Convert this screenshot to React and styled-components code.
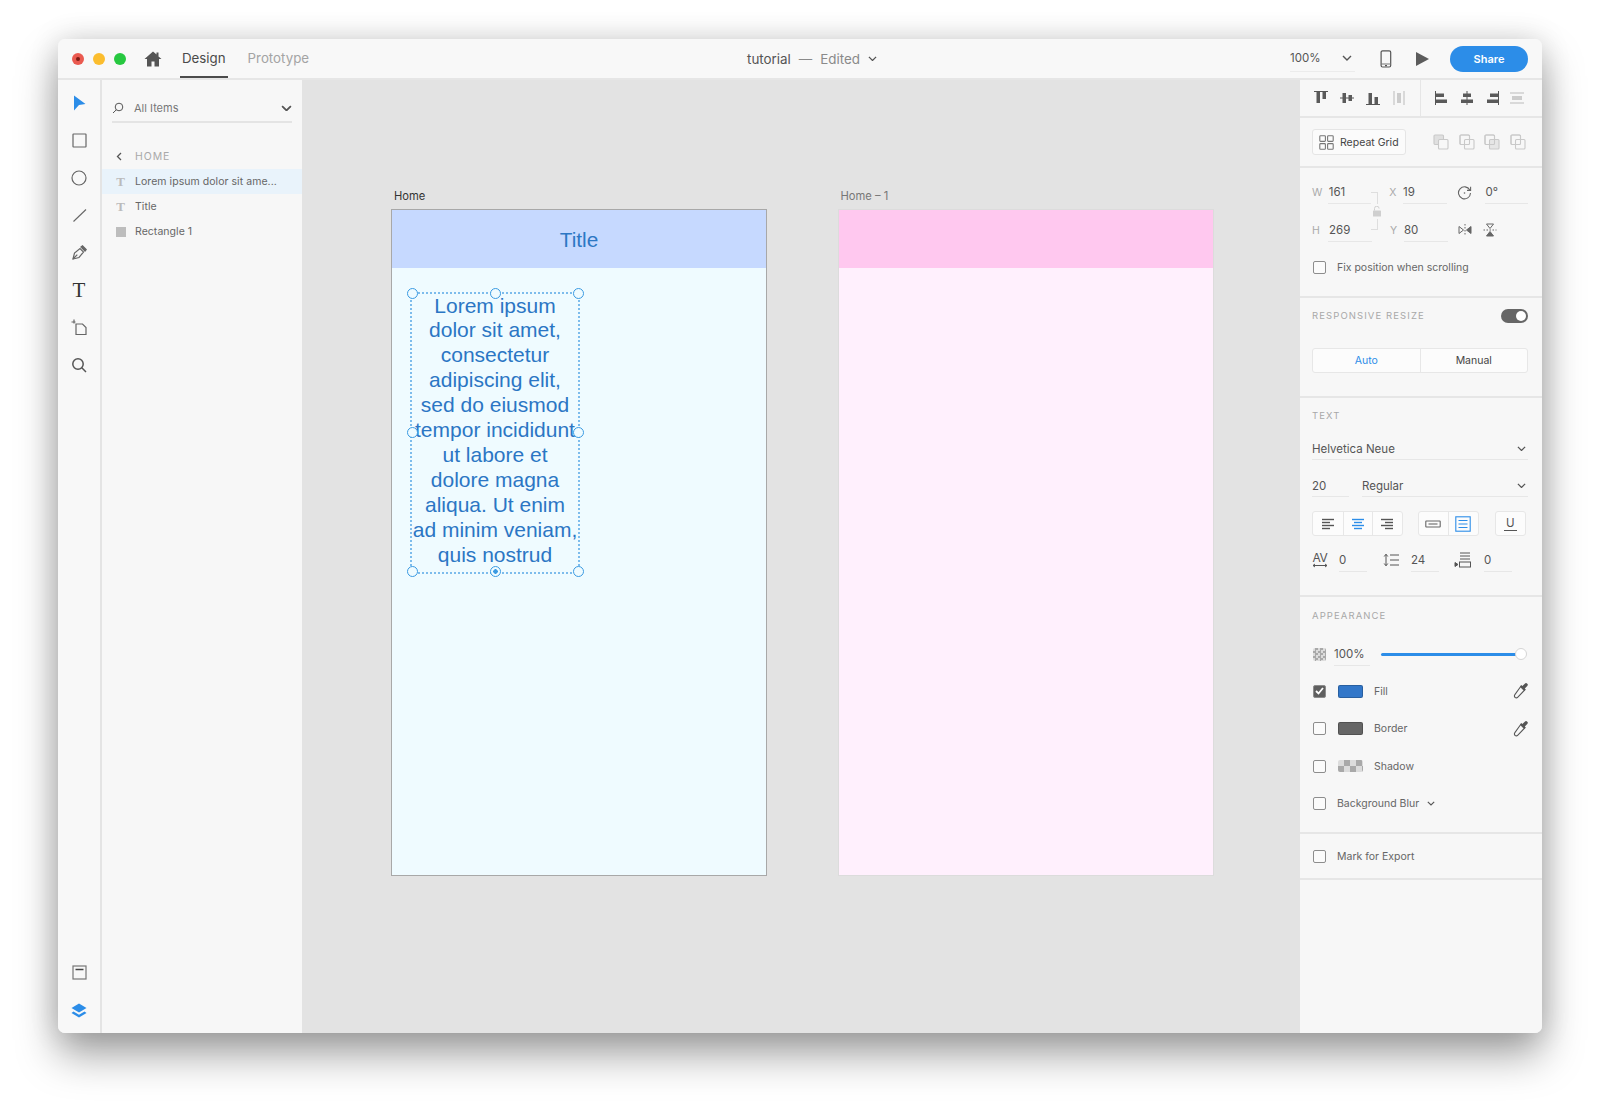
import React from "react";
import styled, { createGlobalStyle } from "styled-components";

const GlobalStyle = createGlobalStyle`
  html, body { margin: 0; padding: 0; background: #ffffff; }
  body { font-family: "Inter", "Liberation Sans", sans-serif; color: #555; }
  * { box-sizing: border-box; }
`;

const Page = styled.div`
  width: 1600px;
  height: 1110px;
  padding: 39px 58px 77px;
  overflow: hidden;
`;

const Window = styled.div`
  width: 1484px;
  height: 994px;
  display: flex;
  flex-direction: column;
  background: #f7f7f7;
  border-radius: 7px;
  overflow: hidden;
  box-shadow: 0 22px 42px rgba(0, 0, 0, 0.36), 0 0 30px rgba(0, 0, 0, 0.14);
`;

/* title bar */
const TitleBar = styled.header`
  height: 41px;
  flex: none;
  display: flex;
  align-items: center;
  background: #f8f8f8;
  border-bottom: 2px solid #e6e6e6;
`;

const TitleLeft = styled.div`
  width: 689px;
  height: 100%;
  display: flex;
  align-items: center;
  padding-left: 14px;
`;

const Light = styled.span`
  width: 12px;
  height: 12px;
  border-radius: 50%;
  margin-right: 9px;
  background: ${(p) => p.$color};
  display: flex;
  align-items: center;
  justify-content: center;
  &::after {
    content: "";
    width: 4px;
    height: 4px;
    border-radius: 50%;
    background: ${(p) => (p.$dot ? "#7c1a14" : "transparent")};
  }
`;

const Slot = styled.span`
  display: flex;
  flex: none;
  margin-left: ${(p) => p.$ml || 0}px;
  margin-right: ${(p) => p.$mr || 0}px;
`;

const Tab = styled.div`
  height: 100%;
  display: flex;
  align-items: center;
  padding: 0 2px;
  margin-right: ${(p) => p.$gap || 0}px;
  font-size: 13.3px;
  color: ${(p) => (p.$active ? "#4a4a4a" : "#a4a4a4")};
  border-bottom: 2px solid ${(p) => (p.$active ? "#4b4b4b" : "transparent")};
`;

const DocTitle = styled.div`
  display: flex;
  align-items: center;
  font-size: 13.4px;
  color: #555;
  gap: 8px;
`;

const Muted = styled.span`
  color: #8a8a8a;
`;

const TitleRight = styled.div`
  margin-left: auto;
  height: 100%;
  display: flex;
  align-items: center;
  padding-right: 14px;
`;

const Zoom = styled.div`
  width: 65px;
  height: 26px;
  display: flex;
  align-items: center;
  justify-content: space-between;
  padding-right: 3px;
  font-size: 11.5px;
  color: #555;
  margin-right: 25px;
  border-bottom: 1px solid #ececec;
`;

const ShareButton = styled.button`
  width: 78px;
  height: 26px;
  border: none;
  border-radius: 13px;
  margin-left: 21px;
  background: #2c8de8;
  color: #fff;
  font: 600 11px "Inter", "Liberation Sans", sans-serif;
`;

/* body */
const Body = styled.div`
  flex: 1;
  display: flex;
  min-height: 0;
`;

const ToolBar = styled.nav`
  width: 44px;
  flex: none;
  display: flex;
  flex-direction: column;
  align-items: center;
  padding: 13px 0 13px 0;
  border-right: 2px solid #e4e4e4;
  background: #f8f8f8;
`;

const Tool = styled.div`
  width: 20px;
  height: 20px;
  margin-bottom: 17.45px;
  display: flex;
  align-items: center;
  justify-content: center;
  &:last-child { margin-bottom: 0; }
`;

const ToolSpacer = styled.div`
  flex: 1;
`;

const SerifT = styled.span`
  font: ${(p) => p.$weight || 400} ${(p) => p.$size || 20}px/1 "Liberation Serif", serif;
  color: ${(p) => p.$color || "#4a4a4a"};
`;

const LayersPanel = styled.aside`
  width: 200px;
  flex: none;
  background: #f7f7f7;
  padding-top: 17px;
  display: flex;
  flex-direction: column;
`;

const SearchRow = styled.div`
  height: 26px;
  margin: 0 10px;
  display: flex;
  align-items: center;
  border-bottom: 2px solid #e4e4e4;
  padding: 0 0 2px 0;
  font-size: 11px;
  color: #777;
  gap: 10px;
  & > svg:last-child { margin-left: auto; }
`;

const HomeRow = styled.div`
  height: 20px;
  margin: 23px 0 3px;
  padding-left: 14px;
  display: flex;
  align-items: center;
  gap: 13px;
  font-size: 10.5px;
  letter-spacing: 0.9px;
  color: #a9a9a9;
`;

const LayerRow = styled.div`
  height: 25px;
  display: flex;
  align-items: center;
  padding-left: 13px;
  gap: 9px;
  font-size: 10.5px;
  letter-spacing: 0.05px;
  color: #666;
  background: ${(p) => (p.$selected ? "#e9f3fb" : "transparent")};
`;

const LayerIcon = styled.span`
  width: 11px;
  display: flex;
  justify-content: center;
  flex: none;
`;

const GraySquare = styled.span`
  width: 10px;
  height: 10px;
  background: #bdbdbd;
`;

/* canvas */
const Canvas = styled.main`
  flex: 1;
  background: #e3e3e3;
  display: flex;
  align-items: flex-start;
  gap: 70.5px;
  padding: 109px 0 0 89px;
`;

const ArtboardColumn = styled.section`
  display: flex;
  flex-direction: column;
  width: 376px;
`;

const ArtboardLabel = styled.div`
  height: 14px;
  margin: 0 0 6px 3px;
  font-size: 11.2px;
  line-height: 14px;
  color: ${(p) => (p.$active ? "#333" : "#777")};
`;

const Artboard = styled.div`
  height: 667px;
  display: flex;
  flex-direction: column;
  background: ${(p) => p.$bg};
  border: 1px solid ${(p) => (p.$active ? "#a8a8a8" : "#dcdcdc")};
`;

const ArtboardHeader = styled.div`
  height: 58px;
  flex: none;
  display: flex;
  align-items: center;
  justify-content: center;
  padding-top: 2px;
  background: ${(p) => p.$bg};
  color: #2c77c4;
  font: 20.8px "Liberation Sans", sans-serif;
`;

const SelectedText = styled.div`
  position: relative;
  width: 170px;
  height: 282px;
  margin: 23.5px 0 0 18px;
  border: 2px dotted #7dbcec;
  color: #2b76c4;
  font: 21px/24.9px "Liberation Sans", sans-serif;
  text-align: center;
  white-space: nowrap;
`;

const Handle = styled.span`
  position: absolute;
  left: ${(p) => p.$x}%;
  top: ${(p) => p.$y}%;
  width: 11px;
  height: 11px;
  margin: -5.5px 0 0 -5.5px;
  border: 1.5px solid #3a9ae2;
  border-radius: 50%;
  background: ${(p) =>
    p.$dot ? "radial-gradient(circle, #3a9ae2 0 2px, #effbff 2.5px)" : "#effbff"};
`;

/* right panel */
const Inspector = styled.aside`
  width: 242px;
  flex: none;
  background: #f7f7f7;
  display: flex;
  flex-direction: column;
`;

const Section = styled.section`
  height: ${(p) => p.$h}px;
  flex: none;
  padding: ${(p) => p.$top || 0}px 14px 0 12px;
  border-bottom: 2px solid #e6e6e6;
`;

const AlignBar = styled.section`
  height: 38px;
  flex: none;
  display: flex;
  border-bottom: 2px solid #e6e6e6;
`;

const AlignGroup = styled.div`
  width: ${(p) => p.$w}px;
  display: flex;
  align-items: center;
  gap: ${(p) => p.$gap}px;
  padding-left: ${(p) => p.$pad}px;
  border-right: ${(p) => (p.$divider ? "1px solid #e6e6e6" : "none")};
`;

const GridRow = styled.div`
  display: flex;
  align-items: center;
`;

const RepeatButton = styled.button`
  width: 94px;
  height: 26px;
  display: flex;
  align-items: center;
  gap: 6px;
  padding: 0 0 0 6px;
  background: #fbfbfb;
  border: 1px solid #e5e5e5;
  border-radius: 3px;
  color: #444;
  font: 10.5px "Inter", "Liberation Sans", sans-serif;
  white-space: nowrap;
`;

const BoolIcons = styled.div`
  display: flex;
  gap: 9.5px;
  margin-left: 27px;
`;

const FieldRow = styled.div`
  height: 24px;
  display: flex;
  align-items: center;
  margin-bottom: ${(p) => p.$mb || 0}px;
  position: relative;
`;

const AxisLabel = styled.span`
  width: ${(p) => p.$w || 16}px;
  margin-left: ${(p) => p.$ml || 0}px;
  font-size: 10.5px;
  color: #aaa;
`;

const Field = styled.div`
  width: ${(p) => p.$w}px;
  height: 24px;
  margin-left: ${(p) => p.$ml || 0}px;
  display: flex;
  align-items: center;
  justify-content: space-between;
  border-bottom: 1px solid #e7e7e7;
  font-size: 11.5px;
  color: #555;
  padding-left: ${(p) => p.$pad || 0}px;
`;

const LockLink = styled.div`
  position: absolute;
  left: 59px;
  top: 12px;
  width: 7px;
  height: 38px;
  border: 1px solid #dedede;
  border-left: none;
  display: flex;
  align-items: center;
`;

const LockBadge = styled.span`
  margin-left: 2px;
  background: #f7f7f7;
  display: flex;
  padding: 2px 0;
`;

const CheckRow = styled.label`
  display: flex;
  align-items: center;
  height: 16px;
  margin-bottom: ${(p) => p.$mb || 0}px;
  font-size: 10.5px;
  color: #666;
`;

const Check = styled.span`
  width: 13px;
  height: 13px;
  flex: none;
  margin: 0 ${(p) => p.$mr ?? 11}px 0 1px;
  border: 1px solid #8d8d8d;
  border-radius: 2px;
  background: ${(p) => (p.$on ? "#5f5f5f" : "#fbfbfb")};
  display: flex;
  align-items: center;
  justify-content: center;
`;

const SectionLabel = styled.div`
  height: 14px;
  font-size: 9.5px;
  line-height: 14px;
  letter-spacing: 1.1px;
  color: #a8a8a8;
`;

const HeaderRow = styled.div`
  height: 16px;
  display: flex;
  align-items: center;
  justify-content: space-between;
`;

const Toggle = styled.span`
  width: 27px;
  height: 14px;
  border-radius: 7px;
  background: #666;
  padding: 2px 2px 2px 15px;
  display: flex;
  &::after {
    content: "";
    width: 10px;
    height: 10px;
    border-radius: 50%;
    background: #fff;
  }
`;

const Segmented = styled.div`
  height: 25px;
  margin-top: 24px;
  display: flex;
  background: #fcfcfc;
  border: 1px solid #e7e7e7;
  border-radius: 3px;
`;

const Segment = styled.div`
  flex: 1;
  display: flex;
  align-items: center;
  justify-content: center;
  font-size: 10.5px;
  color: ${(p) => (p.$active ? "#2c8de8" : "#444")};
  & + & { border-left: 1px solid #e7e7e7; }
`;

const FontRow = styled.div`
  height: 22px;
  margin-top: ${(p) => p.$mt}px;
  display: flex;
  gap: 13px;
`;

const FontField = styled.div`
  flex: ${(p) => (p.$w ? "none" : 1)};
  width: ${(p) => (p.$w ? `${p.$w}px` : "auto")};
  display: flex;
  align-items: center;
  justify-content: space-between;
  border-bottom: 1px solid #e7e7e7;
  padding: 0 2px 0 0;
  font-size: 11.5px;
  color: #555;
`;

const ButtonRow = styled.div`
  height: 25px;
  margin-top: 14px;
  display: flex;
`;

const ButtonGroup = styled.div`
  display: flex;
  margin-right: ${(p) => p.$mr || 0}px;
  background: #fcfcfc;
  border: 1px solid #e7e7e7;
  border-radius: 3px;
`;

const IconButton = styled.div`
  width: 29.5px;
  display: flex;
  align-items: center;
  justify-content: center;
  & + & { border-left: 1px solid #e7e7e7; }
`;

const UnderlineU = styled.span`
  font: 11.5px "Inter", "Liberation Sans", sans-serif;
  color: #555;
  border-bottom: 1px solid #555;
  line-height: 13px;
  padding: 0 2px;
`;

const SpacingRow = styled.div`
  height: 24px;
  margin-top: 12px;
  display: flex;
  align-items: center;
`;

const SpacingIcon = styled.div`
  width: ${(p) => p.$w}px;
  margin-left: ${(p) => p.$ml || 0}px;
  display: flex;
  justify-content: flex-start;
`;

const AvText = styled.span`
  font: 12px/10px "Inter", "Liberation Sans", sans-serif;
  color: #555;
  letter-spacing: -0.3px;
  display: flex;
  flex-direction: column;
  align-items: center;
`;

const OpacityRow = styled.div`
  height: 24px;
  margin: 19px 0 17px;
  display: flex;
  align-items: center;
`;

const Checker = styled.span`
  width: ${(p) => p.$w}px;
  height: ${(p) => p.$h}px;
  flex: none;
  margin-left: ${(p) => p.$ml || 0}px;
  margin-right: ${(p) => p.$mr || 0}px;
  border-radius: 2px;
  background: repeating-conic-gradient(#a9a9a9 0 25%, #dcdcdc 0 50%) 0 0 / ${(p) => p.$cell}px ${(p) => p.$cell}px;
`;

const Slider = styled.div`
  width: 143px;
  height: 3px;
  margin-left: 11px;
  background: #2c8de8;
  border-radius: 2px;
  position: relative;
`;

const Knob = styled.span`
  position: absolute;
  right: -3px;
  top: -5px;
  width: 12px;
  height: 12px;
  border-radius: 50%;
  background: #fff;
  border: 1px solid #d5d5d5;
`;

const Swatch = styled.span`
  width: 25px;
  height: 13px;
  flex: none;
  margin-right: 11px;
  border-radius: 2px;
  background: ${(p) => p.$color};
  border: 1px solid rgba(0, 0, 0, 0.2);
`;

const Dropper = styled.span`
  margin-left: auto;
  display: flex;
`;

const ExportSection = styled.section`
  height: 46px;
  flex: none;
  display: flex;
  align-items: center;
  padding-left: 12px;
  border-bottom: 2px solid #e6e6e6;
`;

/* icons */
const Svg = ({ s = 16, h, children, fill = "none", stroke = "#555", sw = 1 }) => (
  <svg width={s} height={h || s} viewBox={`0 0 ${s} ${h || s}`} fill={fill} stroke={stroke} strokeWidth={sw}>
    {children}
  </svg>
);

const Chevron = ({ w = 10, color = "#555", sw = 1.4 }) => (
  <svg width={w} height={w * 0.6} viewBox="0 0 10 6" fill="none" stroke={color} strokeWidth={sw}>
    <path d="M1 1l4 4 4-4" />
  </svg>
);

const HomeIcon = () => (
  <svg width="18" height="16" viewBox="0 0 18 16" fill="#555">
    <path d="M9 0.5L0.5 8h2.5v7.5h4.5v-5h3v5H15V8h2.5L14.5 5.4V1.5h-2v2.1z" />
  </svg>
);

const Phone = () => (
  <Svg s={12} h={18} sw={1.2}>
    <rect x="1.1" y="0.8" width="9.6" height="16.2" rx="1.5" />
    <path d="M1 14h10" stroke="#777" />
    <path d="M5 15.6h2" />
  </Svg>
);

const Play = () => (
  <svg width="13" height="14" viewBox="0 0 13 14" fill="#5c5c5c"><path d="M0 0l13 7-13 7z" /></svg>
);

const Bar = styled.rect.attrs({ stroke: "none" })`
  fill: ${(p) => p.$fill || "#5a5a5a"};
`;

const AlignIcon = ({ type }) => {
  const bars = {
    top: <><path d="M1 1.5h14" /><Bar x="3.5" y="2" width="3.5" height="11" /><Bar x="9.5" y="2" width="3.5" height="7" /></>,
    middle: <><path d="M1 8h14" /><Bar x="3.5" y="3" width="3.5" height="10" /><Bar x="9.5" y="5" width="3.5" height="6" /></>,
    bottom: <><path d="M1 14.5h14" /><Bar x="3.5" y="3" width="3.5" height="11" /><Bar x="9.5" y="7" width="3.5" height="7" /></>,
    distH: <g stroke="#bbb"><path d="M3 1v14M13 1v14" /><Bar x="6" y="3" width="4" height="10" $fill="#ccc" /></g>,
    left: <><path d="M1.5 1v14" /><Bar x="2" y="3.5" width="8" height="3.5" /><Bar x="2" y="9.5" width="11" height="3.5" /></>,
    center: <><path d="M8 1v14" /><Bar x="4" y="3.5" width="8" height="3.5" /><Bar x="2" y="9.5" width="12" height="3.5" /></>,
    right: <><path d="M14.5 1v14" /><Bar x="6" y="3.5" width="8" height="3.5" /><Bar x="3" y="9.5" width="11" height="3.5" /></>,
    distV: <g stroke="#bbb"><path d="M1 3h14M1 13h14" /><Bar x="3" y="6" width="10" height="4" $fill="#ccc" /></g>,
  };
  return <Svg>{bars[type]}</Svg>;
};

const GridIcon = () => (
  <Svg s={15} stroke="#777" sw={1.1}>
    <rect x="0.8" y="0.8" width="5.6" height="5.6" rx="0.8" />
    <rect x="8.6" y="0.8" width="5.6" height="5.6" rx="0.8" />
    <rect x="0.8" y="8.6" width="5.6" height="5.6" rx="0.8" />
    <rect x="8.6" y="8.6" width="5.6" height="5.6" rx="0.8" />
  </Svg>
);

const BoolIcon = ({ mode }) => (
  <Svg stroke="#c9c9c9" sw={1.1}>
    <rect x="1" y="1" width="9.5" height="9.5" rx="1" fill={mode === 0 ? "#e0e0e0" : "none"} />
    <rect x="5.5" y="5.5" width="9.5" height="9.5" rx="1" fill={mode === 2 ? "#e6e6e6" : "#f7f7f7"} />
    {mode > 0 && <rect x="1" y="1" width="9.5" height="9.5" rx="1" fill="none" />}
  </Svg>
);

const Rotate = () => (
  <Svg s={15} stroke="#666" sw={1.1}>
    <path d="M12.8 5A6 6 0 1 0 13.5 8" />
    <path d="M13.6 1.8v3.6h-3.6" />
    <circle cx="7.5" cy="8" r="0.8" fill="#666" stroke="none" />
  </Svg>
);

const FlipH = () => (
  <Svg s={14} stroke="#666">
    <path d="M7 1v12" strokeDasharray="1.5 1.5" />
    <path d="M1 3.5v7L5.5 7z" />
    <path d="M13 3.5v7L8.5 7z" fill="#666" />
  </Svg>
);

const FlipV = () => (
  <Svg s={14} stroke="#666">
    <path d="M0.5 7h13" strokeDasharray="1.5 1.5" />
    <path d="M3.5 1h7L7 5.5z" />
    <path d="M3.5 13h7L7 8.5z" fill="#666" />
  </Svg>
);

const Lock = () => (
  <svg width="8" height="11" viewBox="0 0 8 11" fill="#cfcfcf">
    <rect y="4.5" width="8" height="6" rx="0.6" />
    <path d="M1.5 4.5V2.5a2.3 2.3 0 0 1 4.6 0" fill="none" stroke="#cfcfcf" />
  </svg>
);

const TextAlign = ({ kind, color = "#555" }) => {
  const lines = {
    left: ["M1 2.5h12", "M1 5.5h8", "M1 8.5h12", "M1 11.5h8"],
    center: ["M1 2.5h12", "M3 5.5h8", "M1 8.5h12", "M3 11.5h8"],
    right: ["M1 2.5h12", "M5 5.5h8", "M1 8.5h12", "M5 11.5h8"],
  };
  return (
    <Svg s={14} stroke={color} sw={1.4}>
      {lines[kind].map((d) => <path key={d} d={d} />)}
    </Svg>
  );
};

const AutoWidth = () => (
  <Svg s={16} stroke="#666" sw={1.1}>
    <rect x="0.8" y="5" width="14.4" height="6" rx="0.5" />
    <path d="M3.5 8h9" />
  </Svg>
);

const FixedBox = () => (
  <Svg s={16} stroke="#2c8de8" sw={1.1}>
    <rect x="0.8" y="0.8" width="14.4" height="14.4" />
    <path d="M3.5 4.5h9M3.5 8h9M3.5 11.5h9" />
  </Svg>
);

const LineSpacing = () => (
  <Svg s={16} h={14} stroke="#555">
    <path d="M3 1.5v11M1.2 3.5L3 1.2l1.8 2.3M1.2 10.5L3 12.8l1.8-2.3" />
    <path d="M7 2h9M7 7h9M7 12h9" />
  </Svg>
);

const ParaSpacing = () => (
  <Svg s={17} h={16} stroke="#555">
    <path d="M6 1h10M6 4h10M6 7h10" />
    <rect x="5.5" y="10" width="11" height="5" />
    <path d="M1 10.5l3 2-3 2z" fill="#555" />
  </Svg>
);

const Eyedropper = () => (
  <svg width="16" height="16" viewBox="0 0 15 15" fill="none" stroke="#555" strokeWidth="1">
    <path d="M8 3.5l3.5 3.5-6 6.2c-.7.7-1.7.9-2.5.4-.9-.6-1-1.9-.3-2.7z" />
    <path d="M7.5 3l1.2-1.1 1 1 2.3-2.3a1.5 1.5 0 0 1 2.3 2.3l-2.3 2.3 1 1-1.2 1.2z" fill="#555" stroke="none" />
  </svg>
);

const CheckMark = () => (
  <svg width="9" height="8" viewBox="0 0 9 8" fill="none" stroke="#fff" strokeWidth="1.8">
    <path d="M1 4l2.5 2.5L8 1" />
  </svg>
);

const ToolIcons = () => (
  <>
    <Tool>
      <svg width="13" height="16" viewBox="0 0 13 16" fill="#2c8de8"><path d="M1 0.5L12.5 9 6 10 1 15.5z" /></svg>
    </Tool>
    <Tool><Svg s={15} stroke="#666" sw={1.2}><rect x="1" y="1" width="13" height="13" rx="0.5" /></Svg></Tool>
    <Tool><Svg s={16} stroke="#666" sw={1.2}><circle cx="8" cy="8" r="7" /></Svg></Tool>
    <Tool><Svg s={15} stroke="#666" sw={1.1}><path d="M1.5 13.5L14 1.5" /></Svg></Tool>
    <Tool>
      <Svg s={15} stroke="#666" sw={1.2}>
        <path d="M1 14l1.5-6L8 3.5l3.5 3.5L7 12.5z" />
        <path d="M1 14l4.3-4.3" />
        <path d="M9 2l1.5-1.2 3.7 3.7L13 6z" fill="#666" />
      </Svg>
    </Tool>
    <Tool><SerifT $size={21} $color="#333">T</SerifT></Tool>
    <Tool>
      <Svg s={17} stroke="#666" sw={1.2}>
        <path d="M5 5h6.5L15 8.5V15.5H5z" />
        <path d="M0.5 3h4M3 0.5v4" />
      </Svg>
    </Tool>
    <Tool>
      <Svg s={16} stroke="#555" sw={1.5}>
        <circle cx="7" cy="7" r="5.2" />
        <path d="M10.8 10.8L15 15" />
      </Svg>
    </Tool>
  </>
);

const handles = [
  [0, 0], [50, 0], [100, 0], [0, 50], [100, 50], [0, 100], [100, 100],
];

const loremLines = [
  "Lorem ipsum", "dolor sit amet,", "consectetur", "adipiscing elit,", "sed do eiusmod",
  "tempor incididunt", "ut labore et", "dolore magna", "aliqua. Ut enim", "ad minim veniam,", "quis nostrud",
];

export default function App() {
  return (
    <Page>
      <GlobalStyle />
      <Window>
        <TitleBar>
          <TitleLeft>
            <Light $color="#ea5a50" $dot />
            <Light $color="#fbbd2e" />
            <Light $color="#27c840" />
            <Slot $ml={9} $mr={18}><HomeIcon /></Slot>
            <Tab $active $gap={18}>Design</Tab>
            <Tab>Prototype</Tab>
          </TitleLeft>
          <DocTitle>
            tutorial <Muted>—</Muted> <Muted>Edited</Muted>
            <Chevron w={9} />
          </DocTitle>
          <TitleRight>
            <Zoom>100%<Chevron w={10} /></Zoom>
            <Phone />
            <Slot $ml={24}><Play /></Slot>
            <ShareButton>Share</ShareButton>
          </TitleRight>
        </TitleBar>
        <Body>
          <ToolBar>
            <ToolIcons />
            <ToolSpacer />
            <Tool>
              <Svg s={15} stroke="#777" sw={1.2}>
                <rect x="1" y="1" width="13" height="13" />
                <path d="M3.5 4.5h8" stroke="#444" strokeWidth="1.5" />
              </Svg>
            </Tool>
            <Tool>
              <svg width="16" height="15" viewBox="0 0 16 15" fill="#2c8de8">
                <path d="M8 0.5L15.5 5 8 9.5 0.5 5z" />
                <path d="M2.5 8.5L8 11.8 13.5 8.5 15.5 10 8 14.5 0.5 10z" />
              </svg>
            </Tool>
          </ToolBar>
          <LayersPanel>
            <SearchRow>
              <Svg s={12} stroke="#555">
                <circle cx="7" cy="5" r="3.8" />
                <path d="M4.3 7.8L1 11" />
              </Svg>
              All Items
              <Chevron w={11} sw={1.6} />
            </SearchRow>
            <HomeRow>
              <svg width="6" height="9" viewBox="0 0 6 9" fill="none" stroke="#555" strokeWidth="1.3"><path d="M5 1L1.5 4.5 5 8" /></svg>
              HOME
            </HomeRow>
            <LayerRow $selected>
              <LayerIcon><SerifT $size={13} $color="#bbb" $weight={700}>T</SerifT></LayerIcon>
              Lorem ipsum dolor sit ame...
            </LayerRow>
            <LayerRow>
              <LayerIcon><SerifT $size={13} $color="#bbb" $weight={700}>T</SerifT></LayerIcon>
              Title
            </LayerRow>
            <LayerRow>
              <LayerIcon><GraySquare /></LayerIcon>
              Rectangle 1
            </LayerRow>
          </LayersPanel>
          <Canvas>
            <ArtboardColumn>
              <ArtboardLabel $active>Home</ArtboardLabel>
              <Artboard $active $bg="#effbff">
                <ArtboardHeader $bg="#c6d9ff">Title</ArtboardHeader>
                <SelectedText>
                  {loremLines.map((line) => <div key={line}>{line}</div>)}
                  {handles.map(([x, y]) => <Handle key={`${x}-${y}`} $x={x} $y={y} />)}
                  <Handle $x={50} $y={100} $dot />
                </SelectedText>
              </Artboard>
            </ArtboardColumn>
            <ArtboardColumn>
              <ArtboardLabel>Home – 1</ArtboardLabel>
              <Artboard $bg="#fff0fd">
                <ArtboardHeader $bg="#ffc8ef" />
              </Artboard>
            </ArtboardColumn>
          </Canvas>
          <Inspector>
            <AlignBar>
              <AlignGroup $w={121} $pad={13} $gap={10} $divider>
                <AlignIcon type="top" />
                <AlignIcon type="middle" />
                <AlignIcon type="bottom" />
                <AlignIcon type="distH" />
              </AlignGroup>
              <AlignGroup $w={121} $pad={13} $gap={9}>
                <AlignIcon type="left" />
                <AlignIcon type="center" />
                <AlignIcon type="right" />
                <AlignIcon type="distV" />
              </AlignGroup>
            </AlignBar>
            <Section $h={50} $top={11}>
              <GridRow>
                <RepeatButton><GridIcon />Repeat Grid</RepeatButton>
                <BoolIcons>
                  {[0, 1, 2, 3].map((m) => <BoolIcon key={m} mode={m} />)}
                </BoolIcons>
              </GridRow>
            </Section>
            <Section $h={130} $top={12}>
              <FieldRow $mb={14}>
                <AxisLabel>W</AxisLabel>
                <Field $w={44} $pad={1}>161</Field>
                <LockLink><LockBadge><Lock /></LockBadge></LockLink>
                <AxisLabel $ml={18} $w={14}>X</AxisLabel>
                <Field $w={44}>19</Field>
                <Slot $ml={10}><Rotate /></Slot>
                <Field $w={44} $ml={13} $pad={1}>0°</Field>
              </FieldRow>
              <FieldRow $mb={17}>
                <AxisLabel>H</AxisLabel>
                <Field $w={44} $pad={1}>269</Field>
                <AxisLabel $ml={18} $w={14}>Y</AxisLabel>
                <Field $w={44}>80</Field>
                <Slot $ml={10}><FlipH /></Slot>
                <Slot $ml={11}><FlipV /></Slot>
              </FieldRow>
              <CheckRow>
                <Check />
                Fix position when scrolling
              </CheckRow>
            </Section>
            <Section $h={100} $top={10}>
              <HeaderRow>
                <SectionLabel>RESPONSIVE RESIZE</SectionLabel>
                <Toggle />
              </HeaderRow>
              <Segmented>
                <Segment $active>Auto</Segment>
                <Segment>Manual</Segment>
              </Segmented>
            </Section>
            <Section $h={199} $top={11}>
              <SectionLabel>TEXT</SectionLabel>
              <FontRow $mt={15}>
                <FontField>Helvetica Neue<Chevron w={9} /></FontField>
              </FontRow>
              <FontRow $mt={15}>
                <FontField $w={37}>20</FontField>
                <FontField>Regular<Chevron w={9} /></FontField>
              </FontRow>
              <ButtonRow>
                <ButtonGroup $mr={15}>
                  <IconButton><TextAlign kind="left" /></IconButton>
                  <IconButton><TextAlign kind="center" color="#2c8de8" /></IconButton>
                  <IconButton><TextAlign kind="right" /></IconButton>
                </ButtonGroup>
                <ButtonGroup $mr={16}>
                  <IconButton><AutoWidth /></IconButton>
                  <IconButton><FixedBox /></IconButton>
                </ButtonGroup>
                <ButtonGroup>
                  <IconButton><UnderlineU>U</UnderlineU></IconButton>
                </ButtonGroup>
              </ButtonRow>
              <SpacingRow>
                <SpacingIcon $w={27}>
                  <AvText>
                    AV
                    <svg width="16" height="5" viewBox="0 0 16 5" fill="none" stroke="#555"><path d="M1 2.5h14M3 1L1 2.5 3 4M13 1l2 1.5L13 4" /></svg>
                  </AvText>
                </SpacingIcon>
                <Field $w={28}>0</Field>
                <SpacingIcon $w={28} $ml={16}><LineSpacing /></SpacingIcon>
                <Field $w={28}>24</Field>
                <SpacingIcon $w={30} $ml={15}><ParaSpacing /></SpacingIcon>
                <Field $w={28}>0</Field>
              </SpacingRow>
            </Section>
            <Section $h={237} $top={12}>
              <SectionLabel>APPEARANCE</SectionLabel>
              <OpacityRow>
                <Checker $w={13} $h={13} $ml={1} $mr={8} $cell={5} />
                <Field $w={36}>100%</Field>
                <Slider><Knob /></Slider>
              </OpacityRow>
              <CheckRow $mb={21.5}>
                <Check $on $mr={12}><CheckMark /></Check>
                <Swatch $color="#3277c9" />
                Fill
                <Dropper><Eyedropper /></Dropper>
              </CheckRow>
              <CheckRow $mb={21.5}>
                <Check $mr={12} />
                <Swatch $color="#666" />
                Border
                <Dropper><Eyedropper /></Dropper>
              </CheckRow>
              <CheckRow $mb={21.5}>
                <Check $mr={12} />
                <Checker $w={25} $h={12} $mr={11} $cell={12} />
                Shadow
              </CheckRow>
              <CheckRow>
                <Check />
                Background Blur
                <Slot $ml={8}><Chevron w={8} /></Slot>
              </CheckRow>
            </Section>
            <ExportSection>
              <CheckRow>
                <Check />
                Mark for Export
              </CheckRow>
            </ExportSection>
          </Inspector>
        </Body>
      </Window>
    </Page>
  );
}
